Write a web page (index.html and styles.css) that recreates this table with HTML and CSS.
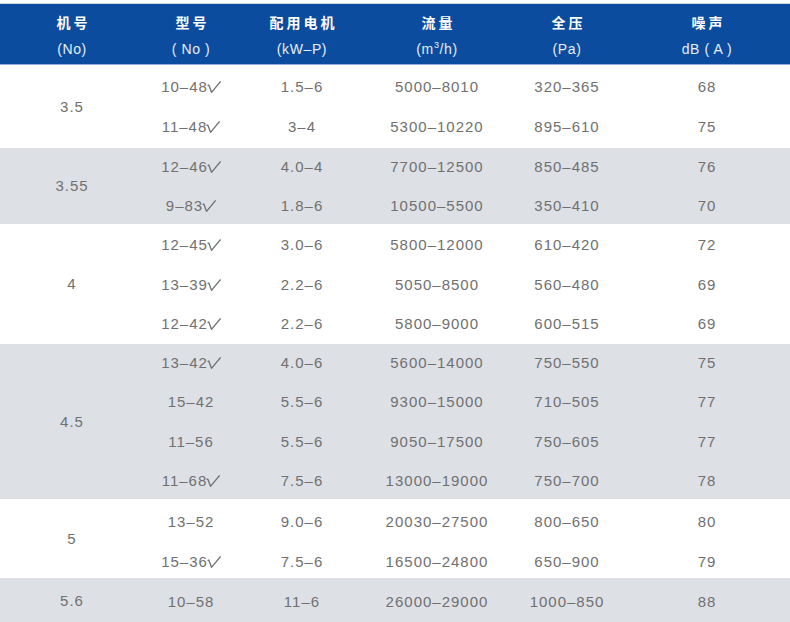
FILE: index.html
```html
<!DOCTYPE html>
<html lang="zh">
<head>
<meta charset="utf-8">
<title>风机参数表</title>
<link rel="stylesheet" href="styles.css">
</head>
<body>
<svg width="0" height="0" class="defs" aria-hidden="true">
  <symbol id="ck" viewBox="0 0 14 12"><polyline points="0.5,4.5 1.8,4 4.5,11.3 13.6,0.4" fill="none" stroke="#707070" stroke-width="1.3" stroke-linejoin="round"/></symbol>
</svg>
<div class="table">
  <div class="head">
    <div class="hc c1"><span class="zh">机号</span><span class="en">(No)</span></div>
    <div class="hc c2"><span class="zh">型号</span><span class="en">( No )</span></div>
    <div class="hc c3"><span class="zh">配用电机</span><span class="en">(kW–P)</span></div>
    <div class="hc c4"><span class="zh">流量</span><span class="en">(m<sup>3</sup>/h)</span></div>
    <div class="hc c5"><span class="zh">全压</span><span class="en">(Pa)</span></div>
    <div class="hc c6"><span class="zh">噪声</span><span class="en">dB ( A )</span></div>
  </div>

  <div class="group g1">
    <div class="no c1">3.5</div>
    <div class="rows">
      <div class="row"><span class="c2">10–48<svg class="ck"><use href="#ck"/></svg></span><span class="c3">1.5–6</span><span class="c4">5000–8010</span><span class="c5">320–365</span><span class="c6">68</span></div>
      <div class="row"><span class="c2">11–48<svg class="ck"><use href="#ck"/></svg></span><span class="c3">3–4</span><span class="c4">5300–10220</span><span class="c5">895–610</span><span class="c6">75</span></div>
    </div>
  </div>

  <div class="group g2 alt">
    <div class="no c1">3.55</div>
    <div class="rows">
      <div class="row"><span class="c2">12–46<svg class="ck"><use href="#ck"/></svg></span><span class="c3">4.0–4</span><span class="c4">7700–12500</span><span class="c5">850–485</span><span class="c6">76</span></div>
      <div class="row"><span class="c2">9–83<svg class="ck"><use href="#ck"/></svg></span><span class="c3">1.8–6</span><span class="c4">10500–5500</span><span class="c5">350–410</span><span class="c6">70</span></div>
    </div>
  </div>

  <div class="group g3">
    <div class="no c1">4</div>
    <div class="rows">
      <div class="row"><span class="c2">12–45<svg class="ck"><use href="#ck"/></svg></span><span class="c3">3.0–6</span><span class="c4">5800–12000</span><span class="c5">610–420</span><span class="c6">72</span></div>
      <div class="row"><span class="c2">13–39<svg class="ck"><use href="#ck"/></svg></span><span class="c3">2.2–6</span><span class="c4">5050–8500</span><span class="c5">560–480</span><span class="c6">69</span></div>
      <div class="row"><span class="c2">12–42<svg class="ck"><use href="#ck"/></svg></span><span class="c3">2.2–6</span><span class="c4">5800–9000</span><span class="c5">600–515</span><span class="c6">69</span></div>
    </div>
  </div>

  <div class="group g4 alt">
    <div class="no c1">4.5</div>
    <div class="rows">
      <div class="row"><span class="c2">13–42<svg class="ck"><use href="#ck"/></svg></span><span class="c3">4.0–6</span><span class="c4">5600–14000</span><span class="c5">750–550</span><span class="c6">75</span></div>
      <div class="row"><span class="c2">15–42</span><span class="c3">5.5–6</span><span class="c4">9300–15000</span><span class="c5">710–505</span><span class="c6">77</span></div>
      <div class="row"><span class="c2">11–56</span><span class="c3">5.5–6</span><span class="c4">9050–17500</span><span class="c5">750–605</span><span class="c6">77</span></div>
      <div class="row"><span class="c2">11–68<svg class="ck"><use href="#ck"/></svg></span><span class="c3">7.5–6</span><span class="c4">13000–19000</span><span class="c5">750–700</span><span class="c6">78</span></div>
    </div>
  </div>

  <div class="group g5">
    <div class="no c1">5</div>
    <div class="rows">
      <div class="row"><span class="c2">13–52</span><span class="c3">9.0–6</span><span class="c4">20030–27500</span><span class="c5">800–650</span><span class="c6">80</span></div>
      <div class="row"><span class="c2">15–36<svg class="ck"><use href="#ck"/></svg></span><span class="c3">7.5–6</span><span class="c4">16500–24800</span><span class="c5">650–900</span><span class="c6">79</span></div>
    </div>
  </div>

  <div class="group g6 alt">
    <div class="no c1">5.6</div>
    <div class="rows">
      <div class="row"><span class="c2">10–58</span><span class="c3">11–6</span><span class="c4">26000–29000</span><span class="c5">1000–850</span><span class="c6">88</span></div>
    </div>
  </div>
</div>
</body>
</html>
```

FILE: styles.css
```css
html, body {
  margin: 0;
  padding: 0;
  background: #ffffff;
}

.defs {
  position: absolute;
  width: 0;
  height: 0;
}

.table {
  width: 790px;
  height: 622px;
  overflow: hidden;
  font-family: "Liberation Sans", "Noto Sans CJK SC", sans-serif;
  color: #707070;
}

.head {
  display: flex;
  height: 60px;
  margin-top: 3px;
  border-top: 1px solid #c9d7ea;
  border-bottom: 1px solid #8fb0dc;
  background: #0b4c9e;
  color: #ffffff;
}

.hc {
  display: flex;
  flex-direction: column;
  align-items: center;
  padding-top: 9px;
}

.zh {
  font-family: "Noto Sans CJK SC", sans-serif;
  font-weight: 700;
  font-size: 14px;
  letter-spacing: 3px;
  line-height: 18px;
  margin-right: -3px;
}

.en {
  margin-top: 10px;
  font-size: 14px;
  letter-spacing: 0.6px;
  line-height: 16px;
  color: #e8eef8;
}

.en sup {
  font-size: 9px;
  line-height: 0;
}

.c1 { width: 144px; text-align: center; flex: none; }
.c2 { width: 94px; text-align: center; flex: none; }
.c3 { width: 128px; text-align: center; flex: none; }
.c4 { width: 142px; text-align: center; flex: none; }
.c5 { width: 118px; text-align: center; flex: none; }
.c6 { width: 162px; text-align: center; flex: none; }

.group {
  display: flex;
  align-items: center;
  font-size: 15px;
  letter-spacing: 1px;
}

.group.alt {
  background: #dde1e6;
}

.g1 { height: 83px; }
.g2 { height: 76px; }
.g3 { height: 120px; }
.g4 { height: 155px; }
.g5 { height: 79px; }
.g6 { height: 46px; }

.g5 .rows { padding-top: 6px; }

.no {
  line-height: 20px;
}

.rows {
  display: flex;
  flex-direction: column;
  justify-content: center;
  align-self: stretch;
}

.row {
  display: flex;
  align-items: center;
  height: 39.6px;
  flex: none;
}

.ck {
  width: 14px;
  height: 12px;
  vertical-align: -1px;
  margin-left: -1px;
}
```
